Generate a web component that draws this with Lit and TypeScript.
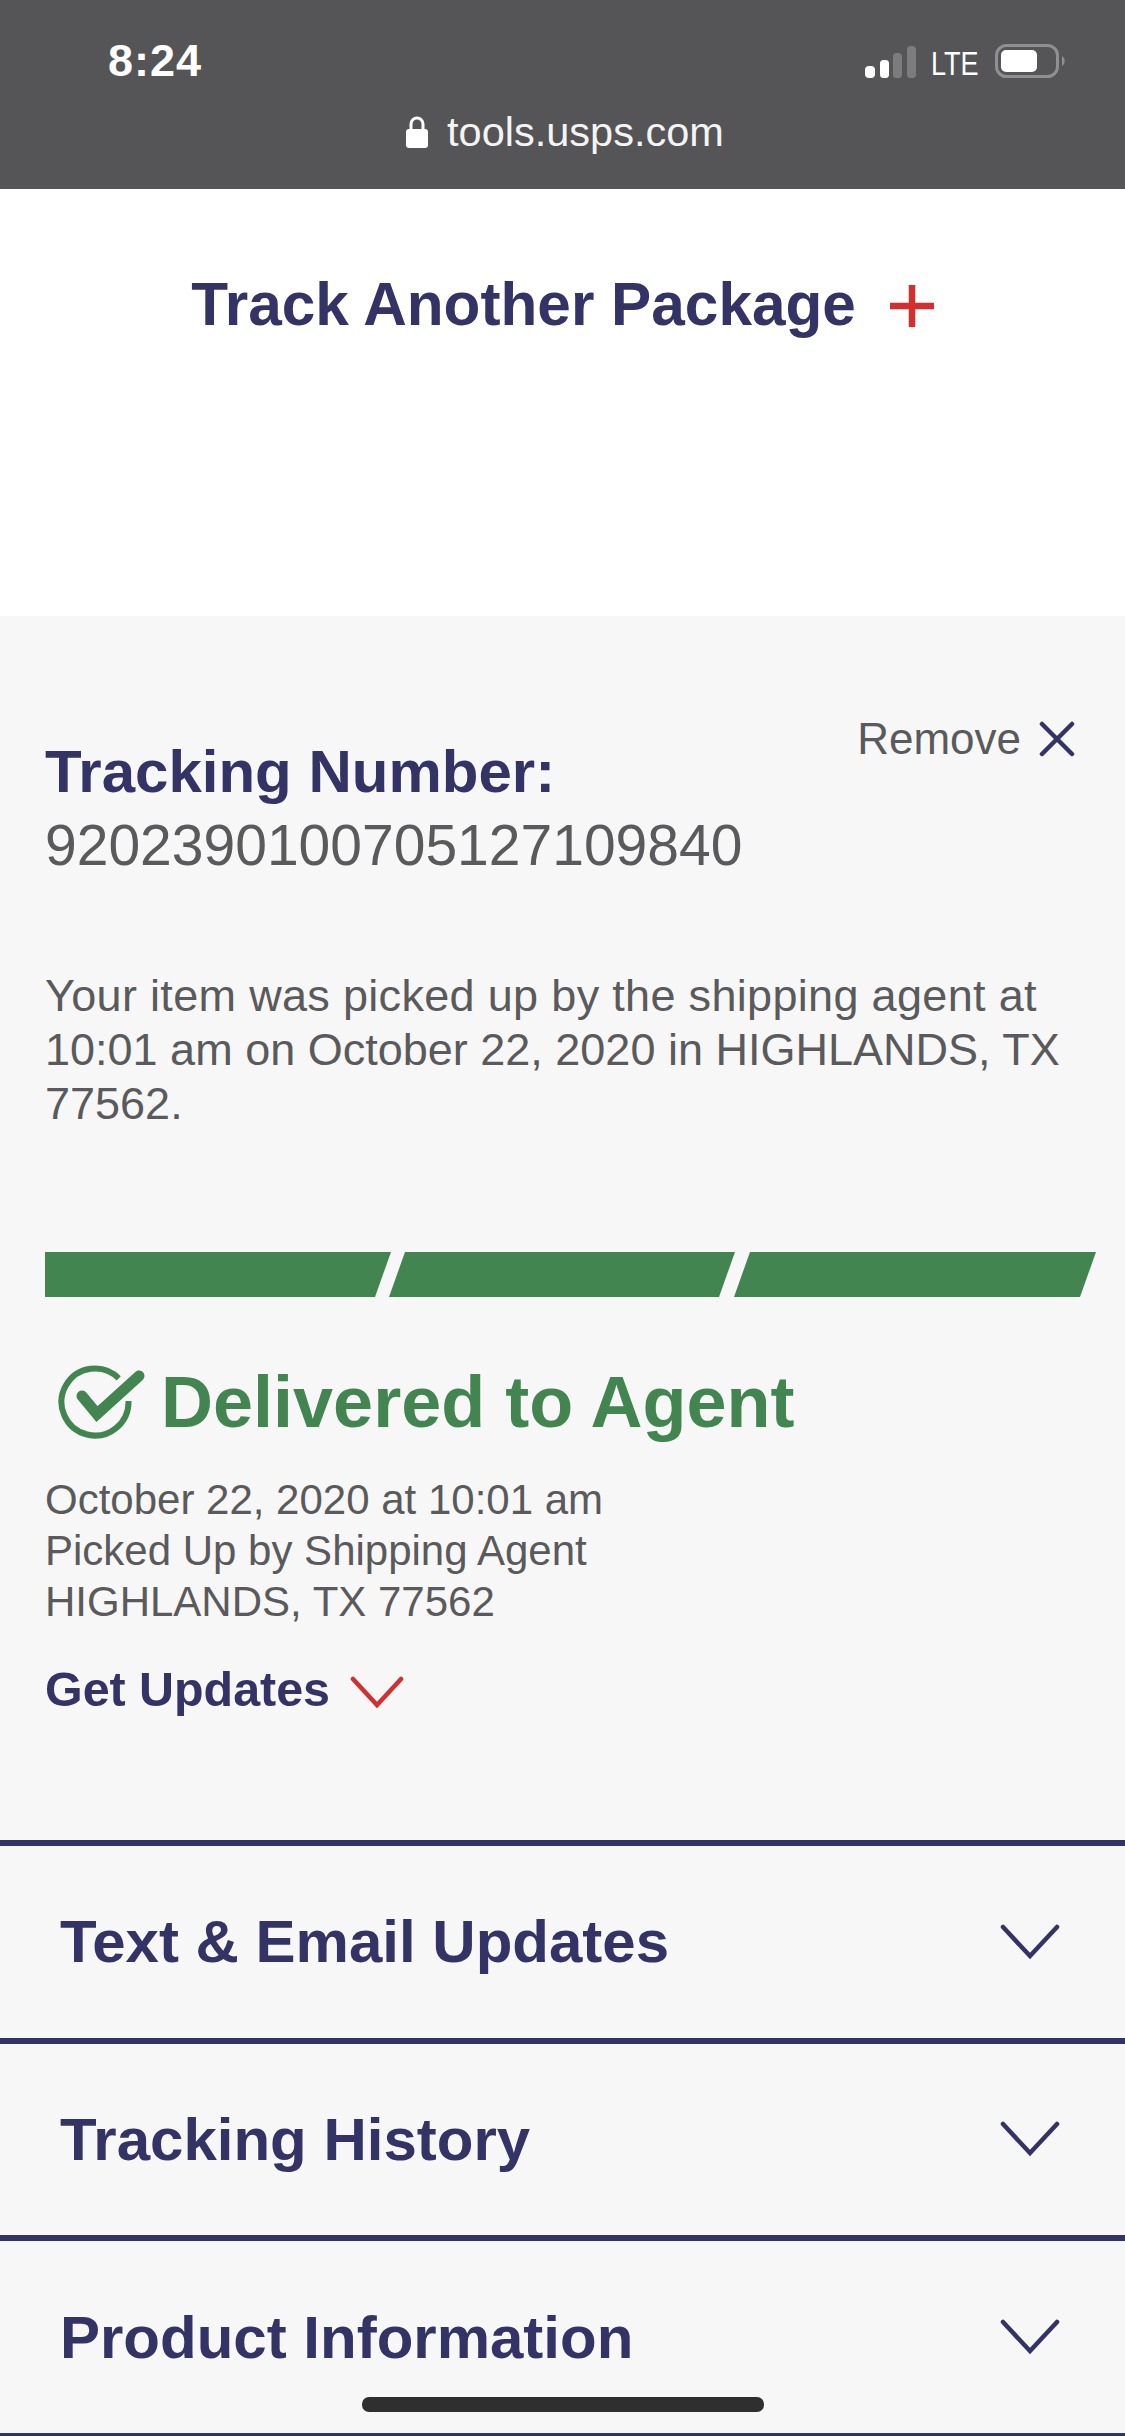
import { LitElement, html, css } from "lit";
import { customElement } from "lit/decorators.js";

const chev = html`<svg class="chev" width="60" height="38" viewBox="0 0 60 38"><path d="M3 4 L30 33 L57 4" fill="none" stroke="#333366" stroke-width="4.5" stroke-linecap="round"/></svg>`;

@customElement("app-root")
export class AppRoot extends LitElement {
  static styles = css`
    :host { display: block; width: 1125px; height: 2436px; overflow: hidden; position: relative; background: #f7f7f7; font-family: "Liberation Sans", Arial, sans-serif; color: #5a5a5c; }
    .top { height: 189px; background: #555557; color: #fff; box-sizing: border-box; }
    .status { display: flex; justify-content: space-between; align-items: flex-end; padding: 44px 58px 0 108px; height: 34px; }
    .time { font-size: 45px; font-weight: 700; letter-spacing: 1px; line-height: 34px; }
    .right { display: flex; align-items: flex-end; gap: 14px; font-size: 33px; line-height: 28px; }
    .lte { display: inline-block; width: 50px; white-space: nowrap; transform: scaleX(0.82); transform-origin: left center; }
    .url { display: flex; justify-content: center; align-items: center; gap: 18px; font-size: 41.5px; line-height: 50px; margin-top: 29px; color: #f4f4f4; padding-left: 4px; }
    .another { height: 427px; background: #fff; display: flex; justify-content: center; align-items: flex-start; gap: 34px; padding-top: 80px; box-sizing: border-box; font-size: 60.3px; line-height: 70px; font-weight: 700; color: #333366; }
    .another svg { margin-top: 16px; }
    .card { padding: 0 45px; position: relative; }
    .remove { position: absolute; top: 95px; right: 50px; display: flex; gap: 18px; align-items: center; font-size: 44px; line-height: 56px; }
    .tn { padding-top: 122px; font-size: 60px; font-weight: 700; color: #333366; line-height: 68px; }
    .num { font-size: 57px; line-height: 64px; color: #5a5a5c; margin-top: 7px; }
    .msg { font-size: 45px; line-height: 54px; margin-top: 92px; white-space: nowrap; }
    .wide { letter-spacing: 0.32px; }
    .bar { display: flex; margin-top: 121px; height: 45px; width: 1052px; }
    .seg { height: 45px; background: #428551; }
    .seg.a { width: 346px; clip-path: polygon(0 0, 100% 0, calc(100% - 16px) 100%, 0 100%); }
    .seg.b { width: 346px; margin-left: -2px; clip-path: polygon(16px 0, 100% 0, calc(100% - 16px) 100%, 0 100%); }
    .seg.c { width: 362px; margin-left: -1px; clip-path: polygon(16px 0, 100% 0, calc(100% - 16px) 100%, 0 100%); }
    .status2 { display: flex; align-items: center; gap: 13px; margin: 65px 0 0 13px; font-size: 72px; font-weight: 700; color: #428551; line-height: 80px; }
    .det { font-size: 42px; line-height: 51px; margin-top: 32px; }
    .get { display: flex; align-items: center; gap: 20px; font-size: 48.4px; font-weight: 700; color: #333366; margin-top: 32px; line-height: 60px; }
    .get svg { margin-top: 6px; }
    .row { border-top: 6px solid #333366; height: 191.67px; display: flex; justify-content: space-between; align-items: center; padding: 0 65px 0 60px; font-size: 60px; font-weight: 700; color: #333366; }
    .first { margin-top: 121px; }
    .home { position: absolute; left: 362px; top: 2397px; width: 402px; height: 15px; border-radius: 7px; background: #2f2f2f; }
  `;
  render() {
    return html`
      <div class="top">
        <div class="status">
          <span class="time">8:24</span>
          <span class="right">
            <svg width="52" height="32" viewBox="0 0 52 32"><rect x="0" y="20" width="10" height="12" rx="4" fill="#fff"/><rect x="15" y="14" width="9" height="18" rx="3.5" fill="#fff"/><rect x="28" y="7" width="9" height="25" rx="3.5" fill="#7c7c7c"/><rect x="42" y="0" width="9" height="32" rx="3.5" fill="#7c7c7c"/></svg>
            <span class="lte">LTE</span>
            <svg width="72" height="34" viewBox="0 0 72 34"><rect x="1.5" y="1.5" width="61" height="31" rx="10" fill="none" stroke="#909090" stroke-width="3"/><rect x="6" y="6" width="36" height="22" rx="5" fill="#fff"/><path d="M67 12 a6 6 0 0 1 0 10z" fill="#909090"/></svg>
          </span>
        </div>
        <div class="url">
          <svg width="24" height="32" viewBox="0 0 24 32"><path d="M6 14 V8 a6 6 0 0 1 12 0 V14" fill="none" stroke="#fff" stroke-width="3"/><rect x="1" y="13" width="22" height="19" rx="3" fill="#fff"/></svg>
          <span>tools.usps.com</span>
        </div>
      </div>
      <div class="another">
        <span>Track Another Package</span>
        <svg width="44" height="42" viewBox="0 0 44 42"><path d="M22 0V42M0 21H44" stroke="#d22f2f" stroke-width="6.5"/></svg>
      </div>
      <div class="card">
        <div class="remove"><span>Remove</span><svg width="36" height="36" viewBox="0 0 36 36"><path d="M3 3L33 33M33 3L3 33" stroke="#333366" stroke-width="4.5" stroke-linecap="round"/></svg></div>
        <div class="tn">Tracking Number:</div>
        <div class="num">9202390100705127109840</div>
        <div class="msg"><span class="wide">Your item was picked up by the shipping agent at</span><br>10:01 am on October 22, 2020 in HIGHLANDS, TX<br>77562.</div>
        <div class="bar"><div class="seg a"></div><div class="seg b"></div><div class="seg c"></div></div>
        <div class="status2">
          <svg width="90" height="74" viewBox="0 0 90 74"><path d="M60.7 13.3 A33.5 33.5 0 1 0 70.5 36" fill="none" stroke="#428551" stroke-width="6"/><path d="M24 31 L39 49 L81 11" fill="none" stroke="#428551" stroke-width="11" stroke-linecap="round"/></svg>
          <span>Delivered to Agent</span>
        </div>
        <div class="det">October 22, 2020 at 10:01 am<br>Picked Up by Shipping Agent<br>HIGHLANDS, TX 77562</div>
        <div class="get"><span>Get Updates</span><svg width="54" height="32" viewBox="0 0 54 32"><path d="M3 3L27 29L51 3" fill="none" stroke="#d22f2f" stroke-width="4.5" stroke-linecap="round"/></svg></div>
      </div>
      <div class="acc">
        <div class="row first"><span>Text &amp; Email Updates</span>${chev}</div>
        <div class="row"><span>Tracking History</span>${chev}</div>
        <div class="row"><span>Product Information</span>${chev}</div>
        <div class="row"></div>
      </div>
      <div class="home"></div>
    `;
  }
}
